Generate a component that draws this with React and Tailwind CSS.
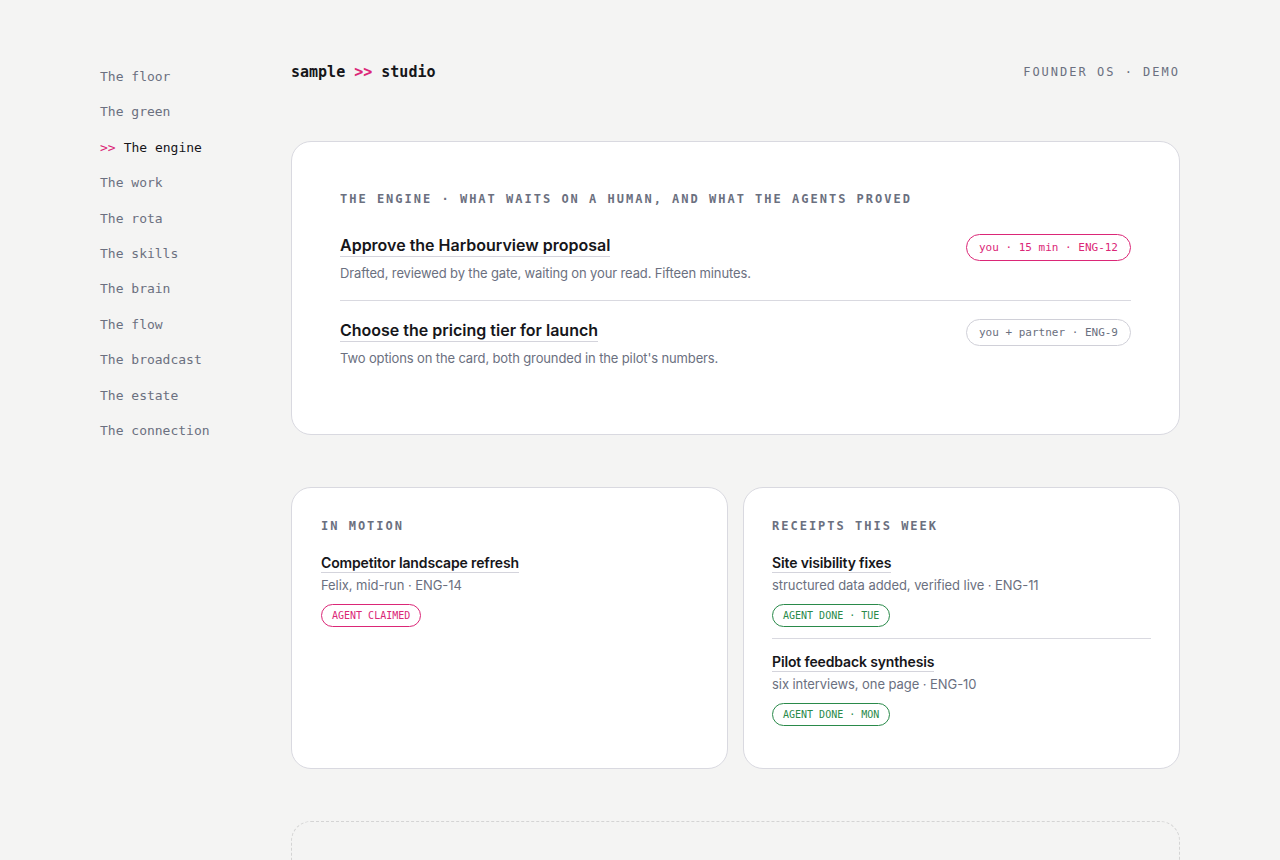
import React from 'react';

const mono = "font-['DejaVu_Sans_Mono','Liberation_Mono',monospace]";
const sans = "font-['Inter','Noto_Sans',sans-serif]";

const nav = [
    'The floor', 'The green', 'The engine', 'The work', 'The rota', 'The skills',
    'The brain', 'The flow', 'The broadcast', 'The estate', 'The connection',
];

const waiting = [
    { title: 'Approve the Harbourview proposal', desc: 'Drafted, reviewed by the gate, waiting on your read. Fifteen minutes.', tag: 'you · 15 min · ENG-12', hot: true },
    { title: 'Choose the pricing tier for launch', desc: "Two options on the card, both grounded in the pilot's numbers.", tag: 'you + partner · ENG-9', hot: false },
];

const receipts = [
    { title: 'Site visibility fixes', desc: 'structured data added, verified live · ENG-11', tag: 'AGENT DONE · TUE' },
    { title: 'Pilot feedback synthesis', desc: 'six interviews, one page · ENG-10', tag: 'AGENT DONE · MON' },
];

const Label = ({ children }) => (
    <h3 className={`${mono} text-[12px] leading-[16px] font-bold tracking-[2px] text-[#6b7080] uppercase`}>{children}</h3>
);

const SmallItem = ({ title, desc, tag, color }) => (
    <div>
        <div className={`${sans} text-[14px] tracking-[-0.01em] font-semibold text-[#16161a] leading-[20px]`}>
            <span className="border-b border-[#d4d4dc] pb-[1px]">{title}</span>
        </div>
        <p className={`${sans} text-[13px] tracking-[-0.005em] text-[#6b7080] mt-[3px] leading-[18px]`}>{desc}</p>
        <span className={`${mono} inline-block mt-[10px] text-[10px] leading-[21px] px-[10px] rounded-full border ${color}`}>{tag}</span>
    </div>
);

export default function App() {
    return (
        <div className="min-h-[860px] bg-[#f4f4f3] px-[100px] pt-[62px] flex">
            <nav className="w-[191px] shrink-0 flex flex-col mt-[1px]">
                {nav.map(n => (
                    <div key={n} className={`${mono} text-[13px] h-[35.4px] leading-[28px] ${n === 'The engine' ? 'text-[#16161a]' : 'text-[#6b7080]'}`}>
                        {n === 'The engine' && <span className="text-[#db2777] mr-[8px]">&gt;&gt;</span>}
                        {n}
                    </div>
                ))}
            </nav>

            <main className="flex-1 min-w-0">
                <header className="flex items-center justify-between h-[20px]">
                    <div className={`${mono} text-[15px] font-bold text-[#16161a]`}>
                        sample <span className="text-[#db2777]">&gt;&gt;</span> studio
                    </div>
                    <div className={`${mono} text-[12px] tracking-[2px] text-[#6b7080]`}>FOUNDER OS · DEMO</div>
                </header>

                <section className="mt-[59px] bg-white border border-[#d9d9e0] rounded-[20px] px-[48px] pt-[49px] pb-[66px]">
                    <Label>The engine · what waits on a human, and what the agents proved</Label>
                    <div className="mt-[26px]">
                        {waiting.map((w, i) => (
                            <div key={w.title} className={`flex items-start justify-between ${i > 0 ? 'border-t border-[#d9d9e0] pt-[17px]' : ''} ${i === 0 ? 'pb-[17px]' : ''}`}>
                                <div>
                                    <div className={`${sans} text-[16px] font-semibold text-[#16161a] leading-[24px]`}>
                                        <span className="border-b border-[#d4d4dc] pb-[1px]">{w.title}</span>
                                    </div>
                                    <p className={`${sans} text-[13px] tracking-[-0.01em] text-[#6b7080] mt-[6px] leading-[20px]`}>{w.desc}</p>
                                </div>
                                <span className={`${mono} mt-[1px] text-[11px] leading-[25px] px-[12px] rounded-full border ${w.hot ? 'border-[#db2777] text-[#db2777]' : 'border-[#d0d0d8] text-[#6b7080]'}`}>{w.tag}</span>
                            </div>
                        ))}
                    </div>
                </section>

                <div className="mt-[52px] grid grid-cols-2 gap-[15px]">
                    <section className="bg-white border border-[#d9d9e0] rounded-[20px] px-[29px] pt-[30px] h-[282px]">
                        <Label>In motion</Label>
                        <div className="mt-[19px]">
                            <SmallItem title="Competitor landscape refresh" desc="Felix, mid-run · ENG-14" tag="AGENT CLAIMED" color="border-[#db2777] text-[#db2777]" />
                        </div>
                    </section>
                    <section className="bg-white border border-[#d9d9e0] rounded-[20px] px-[28px] pt-[30px] h-[282px]">
                        <Label>Receipts this week</Label>
                        <div className="mt-[19px]">
                            {receipts.map((r, i) => (
                                <div key={r.title} className={i > 0 ? 'border-t border-[#d9d9e0] mt-[11px] pt-[13px]' : ''}>
                                    <SmallItem title={r.title} desc={r.desc} tag={r.tag} color="border-[#2a8a4a] text-[#2a8a4a]" />
                                </div>
                            ))}
                        </div>
                    </section>
                </div>

                <section className="mt-[52px] h-[120px] border border-dashed border-[#d4d4d4] rounded-[20px]" />
            </main>
        </div>
    );
}
